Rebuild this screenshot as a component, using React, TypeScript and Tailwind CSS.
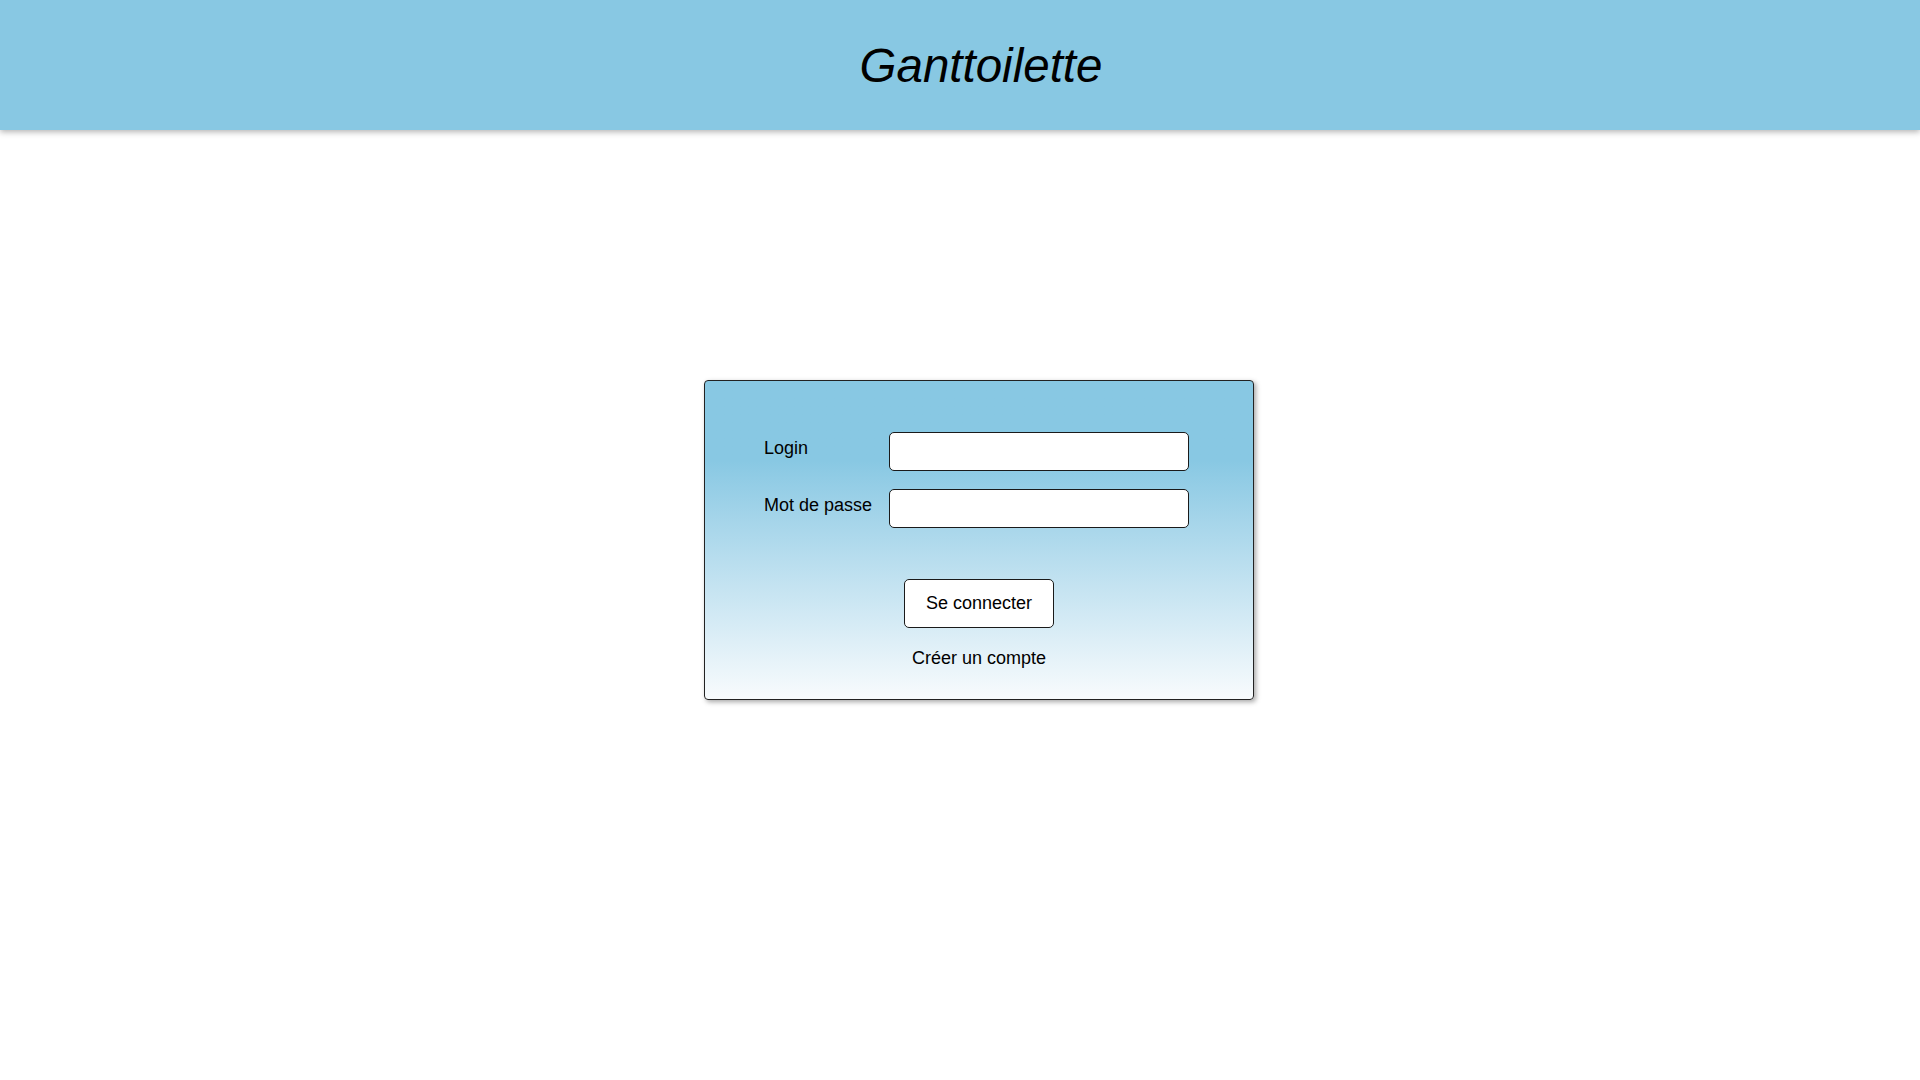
export default function App() {
  return (
    <div className="min-h-screen bg-white text-black font-['Liberation_Sans',Arial,sans-serif]">
      <header className="h-[130px] bg-[#88c8e3] shadow-[0_2px_6px_rgba(0,0,0,0.3)] flex items-center justify-center pl-[42px] pt-[2px]">
        <h1 className="text-[47.5px] italic leading-none">Ganttoilette</h1>
      </header>

      <main className="flex justify-center pt-[250px]">
        <div className="ml-[38px] w-[550px] h-[320px] rounded-[4px] border border-[#222] bg-gradient-to-b from-[#88c8e3] from-25% to-[#f8fbfd] shadow-[2px_2px_5px_rgba(0,0,0,0.35)] pt-[51px] text-[18px]">
          <div className="flex flex-col gap-[18px] pl-[59px]">
            <div className="flex items-start">
              <label className="w-[125px] pt-[3px]">Login</label>
              <input
                type="text"
                className="w-[300px] h-[39px] rounded-[5px] border border-[#1a1a1a] bg-white px-2 outline-none"
              />
            </div>
            <div className="flex items-start">
              <label className="w-[125px] pt-[3px]">Mot de passe</label>
              <input
                type="password"
                className="w-[300px] h-[39px] rounded-[5px] border border-[#1a1a1a] bg-white px-2 outline-none"
              />
            </div>
          </div>

          <div className="flex flex-col items-center mt-[51px]">
            <button className="w-[150px] h-[49px] rounded-[5px] border border-[#1a1a1a] bg-white text-[18px]">
              Se connecter
            </button>
            <a className="mt-[17px]">Créer un compte</a>
          </div>
        </div>
      </main>
    </div>
  )
}
